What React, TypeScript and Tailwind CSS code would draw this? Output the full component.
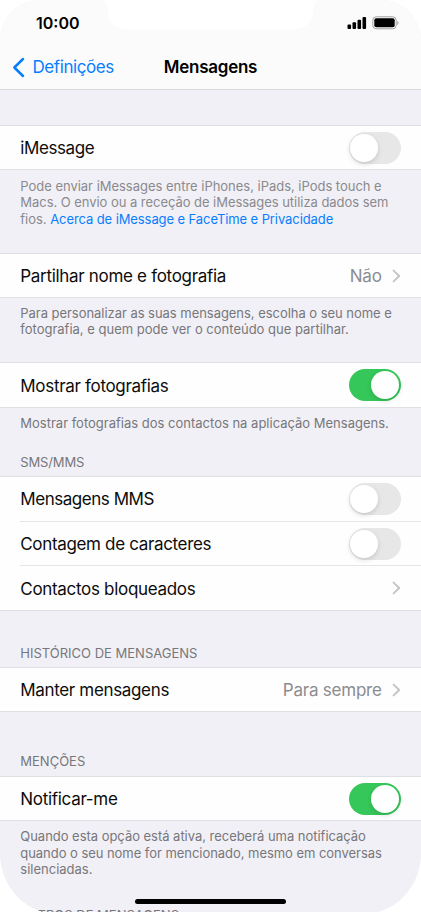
import type { ReactNode } from "react";

function Toggle({ on = false }: { on?: boolean }) {
  return (
    <div
      className={`flex h-8 w-[52px] shrink-0 items-center rounded-full px-[1.75px] ${
        on ? "justify-end bg-[#35c759]" : "justify-start bg-[#e7e7e7]"
      }`}
    >
      <div className="size-7 rounded-full bg-white shadow-[0_2px_5px_rgba(0,0,0,0.14)]" />
    </div>
  );
}

function Chevron() {
  return (
    <svg width="9" height="14" viewBox="0 0 9 14" fill="none" className="shrink-0">
      <path d="M1.6 1.6 7.2 7 1.6 12.4" stroke="#c4c4c7" strokeWidth="1.9" strokeLinecap="round" strokeLinejoin="round" />
    </svg>
  );
}

function Card({ height, children }: { height: string; children: ReactNode }) {
  return <div className={`flex shrink-0 flex-col border-y border-[#e0e0e4] bg-[#fefefe] ${height}`}>{children}</div>;
}

function Row({ label, tracking, children }: { label: string; tracking: string; children: ReactNode }) {
  return (
    <div className="flex min-h-0 flex-1 items-center justify-between pr-[20.3px] pl-[20.3px]">
      <span className={`text-[17px] leading-6 whitespace-nowrap text-[#0c0c0c] ${tracking}`}>{label}</span>
      {children}
    </div>
  );
}

function Value({ text, tracking }: { text: string; tracking: string }) {
  return (
    <div className="flex items-center gap-[10px]">
      <span className={`text-[17px] leading-6 whitespace-nowrap text-[#8c8c90] ${tracking}`}>{text}</span>
      <Chevron />
    </div>
  );
}

function Divider() {
  return <div className="ml-5 h-px shrink-0 bg-[#e6e6e8]" />;
}

function Notes({ className, children }: { className: string; children: ReactNode }) {
  return (
    <div className={`shrink-0 pl-[20.3px] text-[13px] leading-[16.33px] whitespace-nowrap ${className}`}>{children}</div>
  );
}

function StatusBar() {
  return (
    <div className="flex h-[46px] shrink-0 justify-between pr-[21px] pl-9">
      <span className="pt-3 text-base leading-[22px] font-semibold text-black">10:00</span>
      <svg width="54" height="16" viewBox="0 0 54 16" className="mt-[15px]">
        <rect x="1.5" y="9.5" width="3.6" height="4.6" rx="1" />
        <rect x="6.5" y="7.3" width="3.6" height="6.8" rx="1" />
        <rect x="11.5" y="4.8" width="3.6" height="9.3" rx="1" />
        <rect x="16.5" y="2" width="3.6" height="12.1" rx="1" />
        <rect x="26.8" y="1.8" width="23.4" height="12" rx="3.5" fill="none" stroke="#a0a0a0" />
        <rect x="28.3" y="3.3" width="20.4" height="9" rx="2" />
        <path d="M51.3 6a2.2 2.2 0 0 1 0 4Z" fill="#a0a0a0" />
      </svg>
    </div>
  );
}

export default function App() {
  return (
    <div className="relative h-[912px] w-[421px] overflow-hidden bg-white font-['Inter','Liberation_Sans',sans-serif]">
      <div className="flex h-[915px] flex-col overflow-hidden rounded-t-[40px] rounded-b-[61px] bg-[#f1f0f6]">
        <header className="flex h-[90px] shrink-0 flex-col border-b border-[#d8d8da] bg-[#fbfbfb]">
          <StatusBar />
          <div className="grid h-[43px] grid-cols-[153px_115px_153px] items-center">
            <div className="flex items-center gap-[7.5px] pl-3 text-[17px] tracking-[-0.42px] text-[#087eff]">
              <svg width="13" height="21" viewBox="0 0 13 21" fill="none">
                <path d="M11 2 2.3 10.5 11 19" stroke="currentColor" strokeWidth="2.5" strokeLinecap="round" strokeLinejoin="round" />
              </svg>
              <span className="pt-px">Definições</span>
            </div>
            <h1 className="pt-px text-center text-[17px] font-semibold tracking-[-0.25px] text-black">Mensagens</h1>
          </div>
        </header>

        <div className="h-[35px] shrink-0" />
        <Card height="h-[45px]">
          <Row label="iMessage" tracking="tracking-[-0.42px]"><Toggle /></Row>
        </Card>
        <Notes className="h-[83px] pt-2 tracking-[-0.022px] text-[#8a8a8e]">
          Pode enviar iMessages entre iPhones, iPads, iPods touch e
          <br />
          <span className="tracking-[-0.045px]">Macs. O envio ou a receção de iMessages utiliza dados sem</span>
          <br />
          fios. <span className="tracking-[-0.09px] text-[#087eff]">Acerca de iMessage e FaceTime e Privacidade</span>
        </Notes>

        <Card height="h-[45px]">
          <Row label="Partilhar nome e fotografia" tracking="tracking-[-0.31px]">
            <Value text="Não" tracking="tracking-[-0.2px]" />
          </Row>
        </Card>
        <Notes className="h-16 pt-[7px] text-[#77777b]">
          <span className="tracking-[-0.04px]">Para personalizar as suas mensagens, escolha o seu nome e</span>
          <br />
          fotografia, e quem pode ver o conteúdo que partilhar.
        </Notes>

        <Card height="h-[46px]">
          <Row label="Mostrar fotografias" tracking="tracking-[-0.31px] pt-px"><Toggle on /></Row>
        </Card>
        <Notes className="h-[46px] pt-[7px] text-[#77777b]">
          Mostrar fotografias dos contactos na aplicação Mensagens.
        </Notes>

        <Notes className="h-[22px] tracking-[-0.15px] text-[#77777b]">SMS/MMS</Notes>
        <Card height="h-[135px]">
          <Row label="Mensagens MMS" tracking="tracking-[-0.46px] pt-px"><Toggle /></Row>
          <Divider />
          <Row label="Contagem de caracteres" tracking="tracking-[-0.34px] pt-px"><Toggle /></Row>
          <Divider />
          <Row label="Contactos bloqueados" tracking="tracking-[-0.31px] pt-px"><Chevron /></Row>
        </Card>

        <Notes className="h-14 pt-[33.5px] text-[#77777b]">HISTÓRICO DE MENSAGENS</Notes>
        <Card height="h-[45px]">
          <Row label="Manter mensagens" tracking="tracking-[-0.34px] pt-px">
            <Value text="Para sempre" tracking="tracking-[-0.22px] pt-px" />
          </Row>
        </Card>

        <Notes className="h-16 pt-[41px] text-[#77777b]">MENÇÕES</Notes>
        <Card height="h-[45px]">
          <Row label="Notificar-me" tracking="tracking-[-0.3px]"><Toggle on /></Row>
        </Card>
        <Notes className="h-[86px] pt-[7.3px] text-[#77777b]">
          <span className="tracking-[-0.03px]">Quando esta opção está ativa, receberá uma notificação</span>
          <br />
          <span className="tracking-[-0.045px]">quando o seu nome for mencionado, mesmo em conversas</span>
          <br />
          silenciadas.
        </Notes>
        <Notes className="text-[#77777b]">FILTROS DE MENSAGENS</Notes>
      </div>

      <svg width="221" height="30" viewBox="0 0 221 30" className="absolute top-0 left-[100px]">
        <path d="M0 0C5 0 7.3 3 7.3 8C7.3 21 14 29.5 28 29.5H193C207 29.5 213.7 21 213.7 8C213.7 3 216 0 221 0Z" fill="white" />
      </svg>
      <div className="absolute bottom-2 left-[135px] h-[5.5px] w-[151px] rounded-full bg-black" />
    </div>
  );
}
